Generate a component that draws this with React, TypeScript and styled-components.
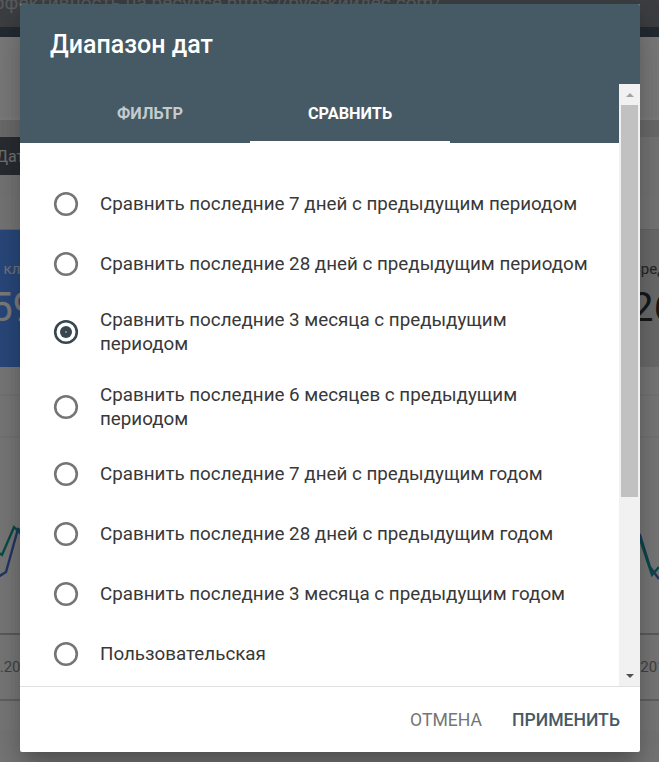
import React from "react";
import styled, { createGlobalStyle } from "styled-components";

const GlobalStyle = createGlobalStyle`
  html, body {
    margin: 0;
    padding: 0;
  }
  body {
    font-family: Roboto, "Noto Sans", "Liberation Sans", sans-serif;
    background: #f5f5f5;
    overflow: hidden;
  }
`;

const options = [
  "Сравнить последние 7 дней с предыдущим периодом",
  "Сравнить последние 28 дней с предыдущим периодом",
  "Сравнить последние 3 месяца с предыдущим периодом",
  "Сравнить последние 6 месяцев с предыдущим периодом",
  "Сравнить последние 7 дней с предыдущим годом",
  "Сравнить последние 28 дней с предыдущим годом",
  "Сравнить последние 3 месяца с предыдущим годом",
  "Пользовательская"
];

const selected = 2;

const RadioIcon = ({ checked }: { checked: boolean }) => (
  <svg width="26" height="26" viewBox="0 0 26 26">
    <circle
      cx="13"
      cy="13"
      r="10.8"
      fill="none"
      stroke={checked ? "#37474f" : "#757575"}
      strokeWidth="2.6"
    />
    {checked && <circle cx="13" cy="13" r="6" fill="#37474f" />}
    {checked && <circle cx="13" cy="13" r="1" fill="#8a9aa2" />}
  </svg>
);

export default function App() {
  return (
    <>
      <GlobalStyle />
      <Page>
        <TopBar>
          <TopTitle>Эффективность на ресурсе https://русскийлес.com/</TopTitle>
        </TopBar>
        <NavStrip />
        <Hero />
        <Band />
        <Toolbar>
          <Chip>Дата: последние 3 месяца</Chip>
        </Toolbar>
        <FilterRow />
        <CardsRow>
          <Card $bg="#5595ff" $width={240} $pad={20} $light>
            <CardLabel>Всего кликов</CardLabel>
            <CardValue>1,59 тыс.</CardValue>
          </Card>
          <Card $bg="#6a45c0" $width={225} $pad={20} $light>
            <CardLabel>Всего показов</CardLabel>
            <CardValue>1,2 млн</CardValue>
          </Card>
          <Card $bg="#0c9a8a" $width={220} $pad={20} $light>
            <CardLabel>Средний CTR</CardLabel>
            <CardValue>4,8%</CardValue>
          </Card>
          <Card $bg="#dcdcdc" $width={120} $pad={6}>
            <CardLabel>Средняя позиция</CardLabel>
            <CardValue>26,1</CardValue>
          </Card>
        </CardsRow>
        <ChartPanel>
          <ChartArea>
            <svg width="659" height="266" viewBox="0 0 659 266">
              <line x1="0" y1="28" x2="659" y2="28" stroke="#e4e4e4" />
              <line x1="0" y1="70" x2="659" y2="70" stroke="#e4e4e4" />
              <polyline
                points="-10,215 6,205 18,162 30,168 600,170 640,168 650,200 659,212"
                fill="none"
                stroke="#4a6fd0"
                strokeWidth="2.4"
              />
              <polyline
                points="-10,180 2,188 14,160 24,170 600,170 640,172 652,208 659,200"
                fill="none"
                stroke="#139b93"
                strokeWidth="2.4"
              />
            </svg>
          </ChartArea>
          <DatesRow>
            <DateLabel>01.05.2019</DateLabel>
            <DateLabel>01.08.2019</DateLabel>
          </DatesRow>
        </ChartPanel>
        <PageFooter />
        <Scrim />

        <Dialog>
          <TitleBar>Диапазон дат</TitleBar>
          <Body>
            <Main>
              <Tabs>
                <Tab>Фильтр</Tab>
                <Tab $active>Сравнить</Tab>
              </Tabs>
              <OptionList>
                {options.map((text, i) => (
                  <Option key={text}>
                    <RadioBox>
                      <RadioIcon checked={i === selected} />
                    </RadioBox>
                    <OptionText>{text}</OptionText>
                  </Option>
                ))}
              </OptionList>
            </Main>
            <ScrollBar>
              <ScrollButton>
                <Arrow $up />
              </ScrollButton>
              <Thumb />
              <TrackRest />
              <ScrollButton>
                <Arrow />
              </ScrollButton>
            </ScrollBar>
          </Body>
          <Footer>
            <TextButton>Отмена</TextButton>
            <TextButton $primary>Применить</TextButton>
          </Footer>
        </Dialog>
      </Page>
    </>
  );
}

/* page behind the dialog */

const Page = styled.div`
  position: relative;
  width: 659px;
  height: 762px;
  overflow: hidden;
  display: flex;
  flex-direction: column;
  background: #f5f5f5;
`;

const TopBar = styled.div`
  height: 27px;
  flex-shrink: 0;
  background: #7a7f84;
  overflow: hidden;
`;

const TopTitle = styled.div`
  margin: -8px 0 0 -22px;
  font-size: 19px;
  line-height: 22px;
  color: #b6babe;
  white-space: nowrap;
`;

const NavStrip = styled.div`
  height: 10px;
  flex-shrink: 0;
  background: #4a5666;
`;

const Hero = styled.div`
  height: 80px;
  flex-shrink: 0;
  background: #fafafa;
  border-bottom: 3px solid #ffffff;
`;

const Band = styled.div`
  height: 17px;
  flex-shrink: 0;
  background: #dcdcdc;
`;

const Toolbar = styled.div`
  height: 38px;
  flex-shrink: 0;
  display: flex;
  align-items: center;
  background: #f0f0f0;
`;

const Chip = styled.div`
  height: 38px;
  display: flex;
  align-items: center;
  padding: 0 14px 0 0;
  margin-left: -4px;
  background: #545c66;
  color: #e8e8e8;
  font-size: 16px;
  white-space: nowrap;
`;

const FilterRow = styled.div`
  height: 55px;
  flex-shrink: 0;
  background: #f2f2f2;
  border-top: 22px solid #f0f0f0;
  box-sizing: border-box;
  border-bottom: 1px solid #d0d0d0;
`;

const CardsRow = styled.div`
  height: 137px;
  flex-shrink: 0;
  display: flex;
  margin-left: -60px;
`;

const Card = styled.div<{
  $bg: string;
  $width: number;
  $pad: number;
  $light?: boolean;
}>`
  width: ${(p) => p.$width}px;
  flex-shrink: 0;
  background: ${(p) => p.$bg};
  color: ${(p) => (p.$light ? "#ffffff" : "#333333")};
  padding: 30px 0 0 ${(p) => p.$pad}px;
  box-sizing: border-box;
  white-space: nowrap;
`;

const CardLabel = styled.div`
  font-size: 15px;
  line-height: 18px;
  opacity: 0.85;
`;

const CardValue = styled.div`
  font-size: 40px;
  line-height: 48px;
  margin-top: 6px;
`;

const ChartPanel = styled.div`
  flex: 1;
  display: flex;
  flex-direction: column;
  background: #f7f7f7;
`;

const ChartArea = styled.div`
  height: 266px;
  flex-shrink: 0;
  border-bottom: 2px solid #bdbdbd;
  line-height: 0;
`;

const DatesRow = styled.div`
  height: 64px;
  flex-shrink: 0;
  display: flex;
  justify-content: space-between;
  align-items: center;
  margin: 0 -15px 0 -38px;
  border-bottom: 2px solid #c8c8c8;
`;

const DateLabel = styled.div`
  font-size: 15px;
  color: #8a8a8a;
`;

const PageFooter = styled.div`
  flex: 1;
  background: #f2f2f2;
  border-top: 30px solid #f7f7f7;
`;

const Scrim = styled.div`
  position: absolute;
  inset: 0;
  background: rgba(0, 0, 0, 0.5);
`;

/* dialog */

const Dialog = styled.div`
  position: absolute;
  top: 4px;
  left: 20px;
  width: 620px;
  height: 748px;
  display: flex;
  flex-direction: column;
  background: #ffffff;
  border-radius: 2px;
  overflow: hidden;
  box-shadow: 0 11px 15px -7px rgba(0, 0, 0, 0.2),
    0 24px 38px 3px rgba(0, 0, 0, 0.14), 0 9px 46px 8px rgba(0, 0, 0, 0.12);
`;

const TitleBar = styled.div`
  height: 80px;
  flex-shrink: 0;
  display: flex;
  align-items: center;
  padding-left: 30px;
  background: #455a64;
  color: #ffffff;
  font-size: 25px;
  font-weight: 500;
`;

const Body = styled.div`
  flex: 1;
  min-height: 0;
  display: flex;
`;

const Main = styled.div`
  flex: 1;
  min-width: 0;
  display: flex;
  flex-direction: column;
  overflow: hidden;
`;

const Tabs = styled.div`
  height: 59px;
  flex-shrink: 0;
  display: flex;
  padding-left: 30px;
  background: #455a64;
`;

const Tab = styled.div<{ $active?: boolean }>`
  width: 200px;
  display: flex;
  align-items: center;
  justify-content: center;
  padding-top: 1px;
  border-bottom: 2px solid ${(p) => (p.$active ? "#ffffff" : "transparent")};
  color: ${(p) => (p.$active ? "#ffffff" : "rgba(255, 255, 255, 0.7)")};
  font-size: 16.3px;
  font-weight: 700;
  text-transform: uppercase;
`;

const OptionList = styled.div`
  padding: 31px 26px 0 33px;
`;

const Option = styled.div`
  min-height: 60px;
  padding: 13.5px 0;
  box-sizing: border-box;
  display: flex;
  align-items: center;
  gap: 21px;
`;

const RadioBox = styled.div`
  width: 26px;
  height: 26px;
  flex-shrink: 0;
  line-height: 0;
`;

const OptionText = styled.div`
  font-size: 18.8px;
  line-height: 24px;
  color: #383838;
`;

const ScrollBar = styled.div`
  width: 21px;
  flex-shrink: 0;
  display: flex;
  flex-direction: column;
  background: #f1f1f1;
`;

const ScrollButton = styled.div`
  height: 21px;
  flex-shrink: 0;
  display: flex;
  align-items: center;
  justify-content: center;
`;

const Arrow = styled.div<{ $up?: boolean }>`
  width: 0;
  height: 0;
  border-left: 4px solid transparent;
  border-right: 4px solid transparent;
  ${(p) =>
    p.$up
      ? "border-bottom: 4px solid #a3a3a3;"
      : "border-top: 4px solid #505050;"}
`;

const Thumb = styled.div`
  height: 392px;
  flex-shrink: 0;
  margin: 0 2px;
  background: #c1c1c1;
`;

const TrackRest = styled.div`
  flex: 1;
`;

const Footer = styled.div`
  height: 65px;
  flex-shrink: 0;
  display: flex;
  align-items: center;
  justify-content: flex-end;
  gap: 30px;
  padding-right: 20px;
  border-top: 1px solid #e0e0e0;
`;

const TextButton = styled.div<{ $primary?: boolean }>`
  font-size: 17.6px;
  font-weight: ${(p) => (p.$primary ? 500 : 400)};
  text-transform: uppercase;
  color: ${(p) => (p.$primary ? "#455a64" : "#757575")};
`;
